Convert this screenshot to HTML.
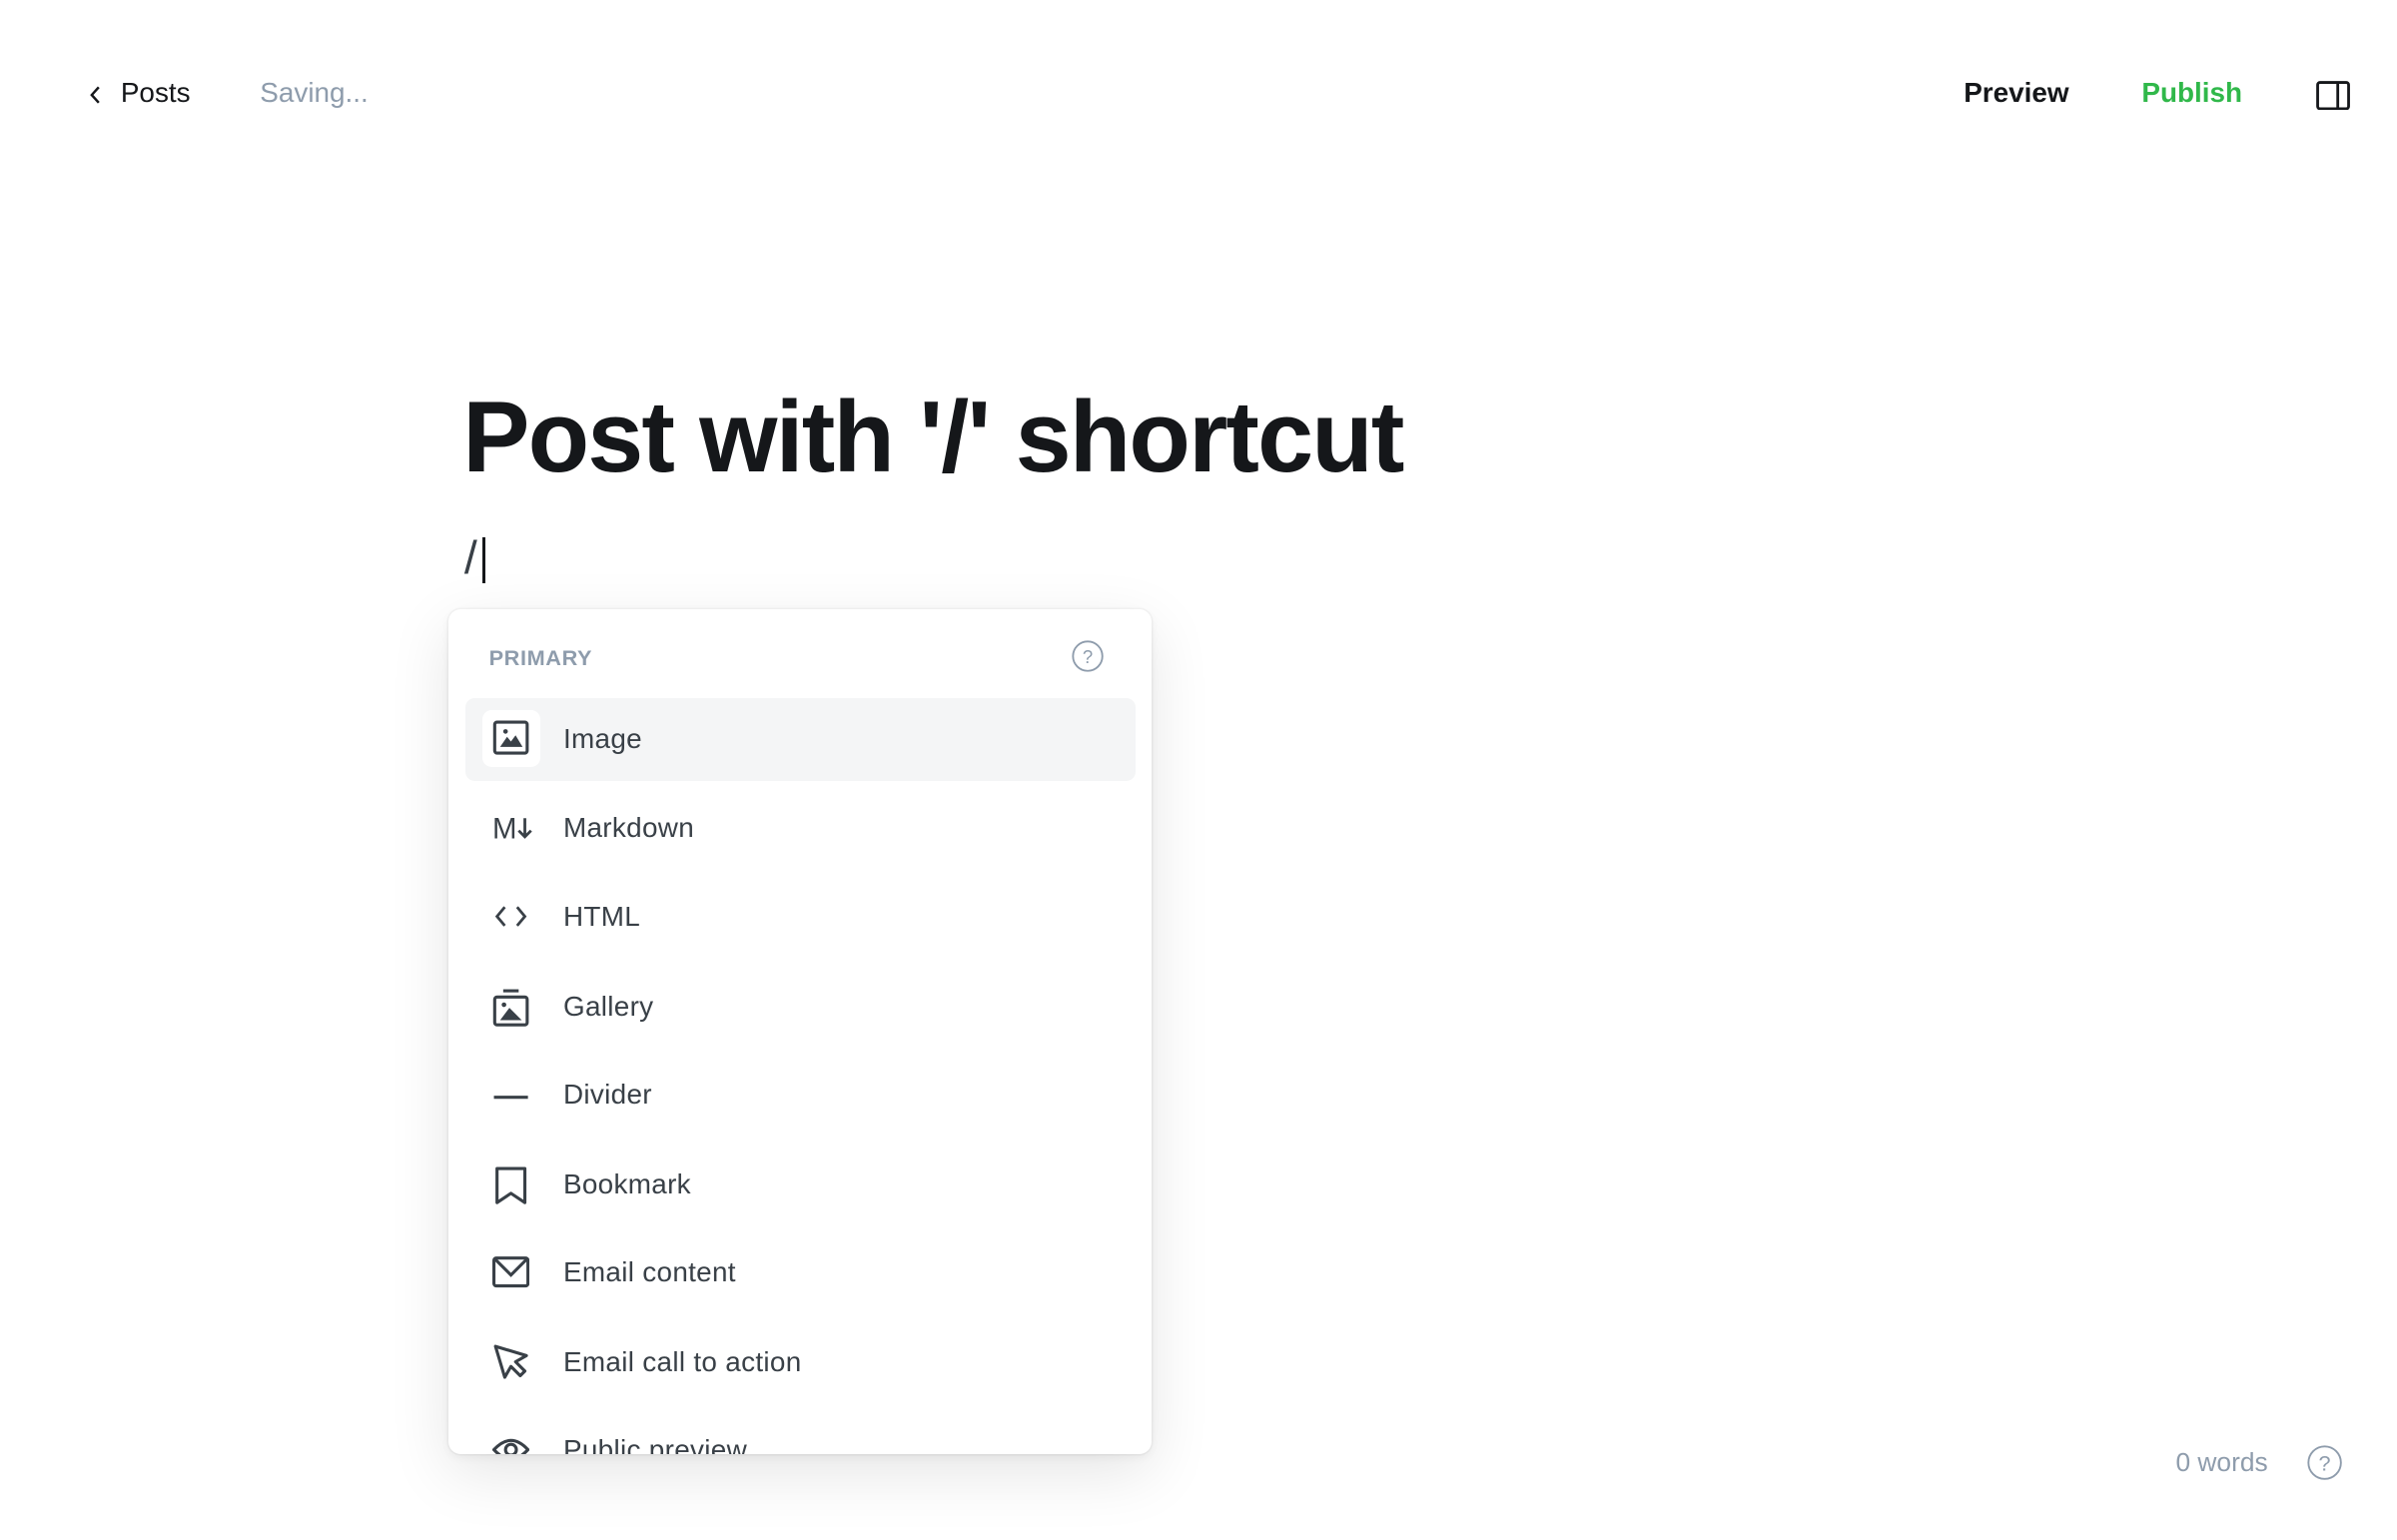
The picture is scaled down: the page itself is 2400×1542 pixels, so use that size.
<!DOCTYPE html>
<html><head><meta charset="utf-8"><style>
html,body{margin:0;padding:0;background:#fff;width:2400px;height:1542px;overflow:hidden}
#w{position:absolute;left:0;top:0;width:1549px;height:995px;zoom:1.5494;font-family:"Liberation Sans",sans-serif;color:#15171a}
.a{position:absolute;white-space:nowrap}
.menu{position:absolute;left:290px;top:394px;width:454px;height:546px;background:#fff;border-radius:8px;box-shadow:0 0 0 1px rgba(0,0,0,.03),0 12px 40px rgba(0,0,0,.10),0 2px 6px rgba(0,0,0,.05);overflow:hidden}
.row{position:absolute;left:0;width:454px;height:40px}
.row svg{position:absolute;left:28px;top:8px}
.row span{position:absolute;left:74px;top:10px;font-size:18px;color:#394047;letter-spacing:.2px}
</style></head><body><div id="w">
<svg class="a" style="left:57px;top:55px" width="10" height="13" viewBox="0 0 10 13"><path d="M7 1.5 2.5 6.5 7 11.5" fill="none" stroke="#15171a" stroke-width="1.6"/></svg>
<div class="a" style="left:78px;top:50px;font-size:18px;color:#15171a">Posts</div>
<div class="a" style="left:168px;top:50px;font-size:18px;color:#8e9cac">Saving...</div>
<div class="a" style="left:1269px;top:50px;font-size:18px;font-weight:bold;color:#15171a">Preview</div>
<div class="a" style="left:1384px;top:50px;font-size:18px;font-weight:bold;color:#30b84a">Publish</div>
<svg class="a" style="left:1497px;top:52px" width="22" height="19" viewBox="0 0 22 19"><rect x="1" y="1" width="20" height="17" rx="1.5" fill="none" stroke="#15171a" stroke-width="1.8"/><line x1="14" y1="1" x2="14" y2="18" stroke="#15171a" stroke-width="1.8"/></svg>
<div class="a" style="left:299px;top:246px;font-size:65px;font-weight:bold;letter-spacing:-1.2px;color:#15171a">Post with '/' shortcut</div>
<div class="a" style="left:300px;top:343px;font-size:30px;color:#394047">/</div>
<div class="a" style="left:312px;top:347px;width:1.5px;height:30px;background:#15171a"></div>
<div class="menu">
 <div class="a" style="left:26px;top:23px;font-size:14px;font-weight:bold;color:#8e9cac;letter-spacing:.4px">PRIMARY</div>
 <svg class="a" style="left:402px;top:19px" width="22" height="22" viewBox="0 0 22 22"><circle cx="11" cy="11" r="9.5" fill="none" stroke="#8e9cac" stroke-width="1.2"/><text x="11" y="15.5" font-size="12" text-anchor="middle" fill="#8e9cac" font-family="Liberation Sans">?</text></svg>
 <div class="a" style="left:11px;top:57px;width:433px;height:54px;background:#f4f5f6;border-radius:6px"></div>
 <div class="a" style="left:22px;top:65px;width:37px;height:37px;background:#fff;border-radius:6px"></div>
 <div class="row" style="top:63px"><svg width="24" height="24" viewBox="0 0 24 24"><rect x="1.5" y="2" width="21" height="20" rx="1.5" fill="none" stroke="#394047" stroke-width="2"/><circle cx="8.5" cy="8" r="1.5" fill="#394047"/><path d="M5 18 9.5 11.5 12 14.5 15 10.5 19.5 18Z" fill="#394047"/></svg><span>Image</span></div>
 <div class="row" style="top:121px"><svg width="30" height="24" viewBox="0 0 30 24"><text x="0" y="19" font-size="19" font-family="Liberation Sans" fill="#394047">M</text><path d="M21 6v12M17 14l4 4 4-4" fill="none" stroke="#394047" stroke-width="1.8"/></svg><span>Markdown</span></div>
 <div class="row" style="top:178px"><svg width="24" height="24" viewBox="0 0 24 24"><path d="M8 6 3 12l5 6M16 6l5 6-5 6" fill="none" stroke="#394047" stroke-width="1.8"/></svg><span>HTML</span></div>
 <div class="row" style="top:236px"><svg width="24" height="26" viewBox="0 0 24 26"><line x1="7" y1="2" x2="17" y2="2" stroke="#394047" stroke-width="2"/><rect x="1.5" y="6" width="21" height="18" rx="1.5" fill="none" stroke="#394047" stroke-width="2"/><circle cx="7.5" cy="11" r="1.5" fill="#394047"/><path d="M5 21 11 13 19 21Z" fill="#394047"/></svg><span>Gallery</span></div>
 <div class="row" style="top:293px"><svg width="24" height="24" viewBox="0 0 24 24"><line x1="1" y1="14" x2="23" y2="14" stroke="#394047" stroke-width="2"/></svg><span>Divider</span></div>
 <div class="row" style="top:351px"><svg width="24" height="26" viewBox="0 0 24 26"><path d="M3 2h18v22l-9-6-9 6Z" fill="none" stroke="#394047" stroke-width="2" stroke-linejoin="round"/></svg><span>Bookmark</span></div>
 <div class="row" style="top:408px"><svg width="24" height="24" viewBox="0 0 24 24"><rect x="1" y="3" width="22" height="18" rx="1.5" fill="none" stroke="#394047" stroke-width="2"/><path d="M2 4l10 10L22 4" fill="none" stroke="#394047" stroke-width="2"/></svg><span>Email content</span></div>
 <div class="row" style="top:466px"><svg width="24" height="24" viewBox="0 0 24 24"><path d="M2 2l6 20 4-7 6 6 3-3-6-6 7-4Z" fill="none" stroke="#394047" stroke-width="2" stroke-linejoin="round"/></svg><span>Email call to action</span></div>
 <div class="row" style="top:523px"><svg width="24" height="24" viewBox="0 0 24 24"><path d="M1 12Q12 0 23 12Q12 24 1 12Z" fill="none" stroke="#394047" stroke-width="2"/><circle cx="12" cy="12" r="3.5" fill="none" stroke="#394047" stroke-width="2"/></svg><span>Public preview</span></div>
</div>
<div class="a" style="left:1406px;top:935px;font-size:17px;color:#8e9cac">0 words</div>
<svg class="a" style="left:1490px;top:933px" width="24" height="24" viewBox="0 0 24 24"><circle cx="12" cy="12" r="10.5" fill="none" stroke="#8e9cac" stroke-width="1.2"/><text x="12" y="17" font-size="14" text-anchor="middle" fill="#8e9cac" font-family="Liberation Sans">?</text></svg>
</div></body></html>
